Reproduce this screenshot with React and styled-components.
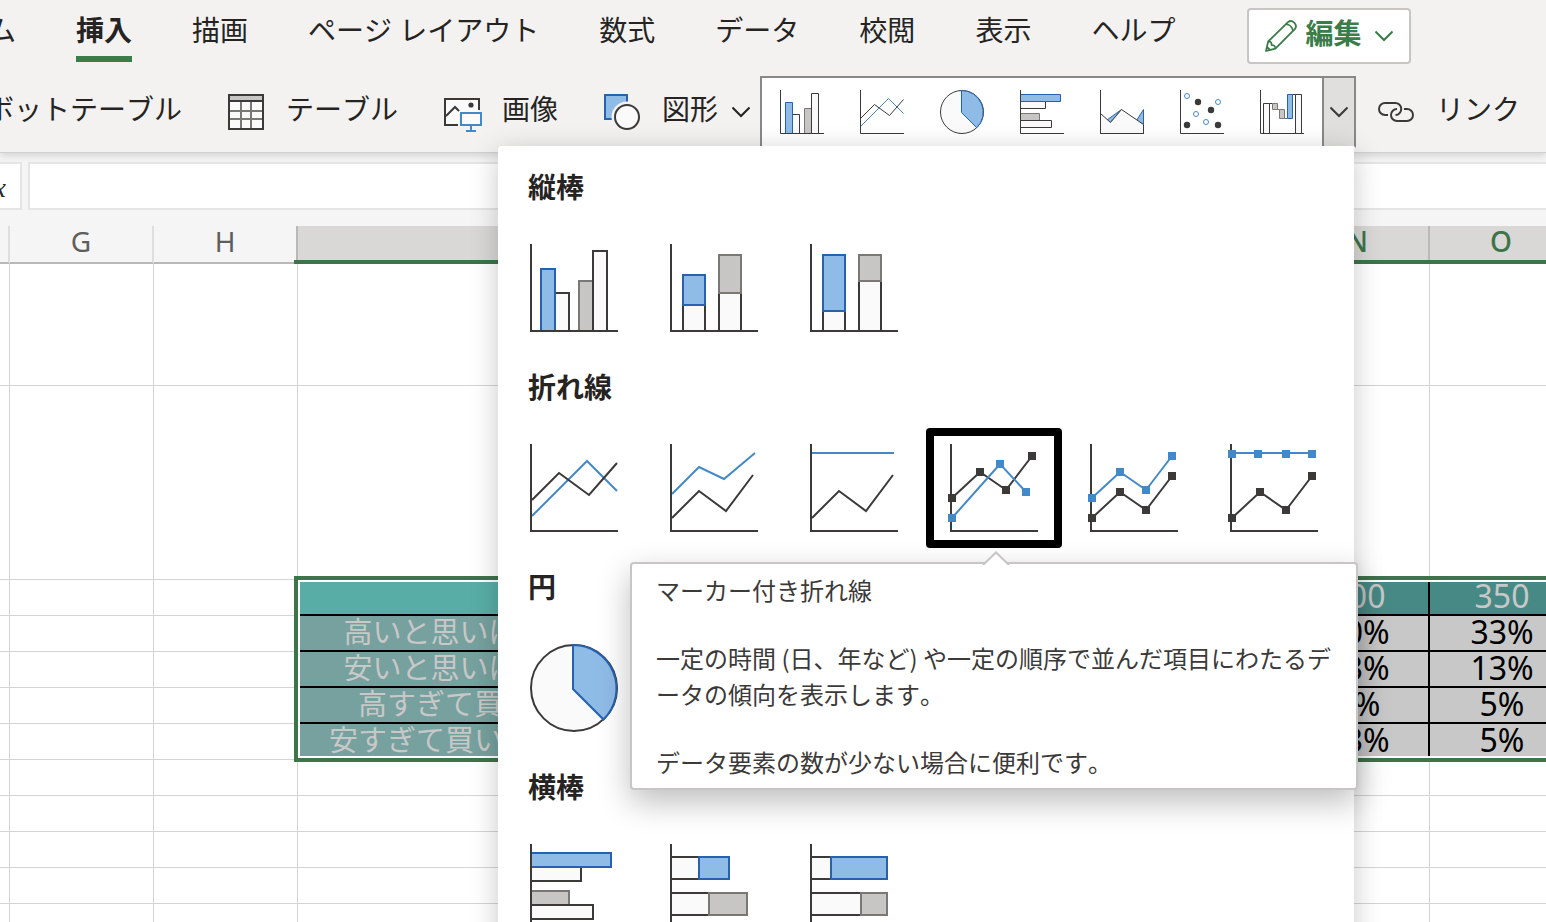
import React from "react";
import styled, { createGlobalStyle, css } from "styled-components";

const INK = "#3b3a39";
const BLUE_LINE = "#4389c9";
const BLUE_EDGE = "#2662ae";
const BLUE_FILL = "#8fbbe7";
const GREY_EDGE = "#7a7874";
const GREY_FILL = "#c8c6c4";
const PAPER = "#fafafa";
const GREEN = "#3d7449";

const GlobalStyle = createGlobalStyle`
  *, *::before, *::after { box-sizing: border-box; }
  body {
    margin: 0;
    background: #fff;
    color: #252423;
    font-family: "Noto Sans", "Noto Sans CJK JP", sans-serif;
    font-size: 28px;
    font-kerning: none;
  }
  button, input { font: inherit; font-kerning: none; color: inherit; }
`;

const Page = styled.div`
  display: flex;
  flex-direction: column;
  height: 100vh;
  overflow: hidden;
`;

const Ribbon = styled.header`
  position: relative;
  z-index: 2;
  flex: none;
  background: #f3f2f1;
  border-bottom: 1px solid #d2d0ce;
  box-shadow: 0 2px 8px rgba(0, 0, 0, 0.16);
`;

const TabRow = styled.nav`
  display: flex;
  align-items: flex-start;
  gap: 60px;
  height: 76px;
  margin-left: -68px;
`;

const Tab = styled.button`
  flex: none;
  height: 62px;
  padding: 4px 0 0;
  border: 0;
  border-bottom: 6px solid ${(p) => (p.$active ? "#3a7d48" : "transparent")};
  background: none;
  font-weight: ${(p) => (p.$active ? 700 : 400)};
  line-height: 50px;
  white-space: nowrap;
`;

const EditButton = styled.button`
  display: flex;
  flex: none;
  align-items: center;
  gap: 8px;
  height: 56px;
  margin: 8px 0 0 12px;
  padding: 0 16px;
  border: 2px solid #c8c6c4;
  border-radius: 4px;
  background: #fff;
  color: #3a7d48;
  font-weight: 700;
  line-height: 48px;
`;

const EditLabel = styled.span`
  padding: 0 6px 6px 0;
`;

const ToolRow = styled.div`
  display: flex;
  align-items: center;
  height: 76px;
  padding-bottom: 4px;
  margin-left: -42px;
`;

const Tool = styled.button`
  display: flex;
  flex: none;
  align-items: center;
  gap: 22px;
  margin-right: ${(p) => p.$after ?? 46}px;
  padding: 0;
  border: 0;
  background: none;
  line-height: 40px;
  white-space: nowrap;
`;

const ToolLabel = styled.span`
  padding-bottom: 6px;
`;

const WithArrow = styled.span`
  display: flex;
  align-items: center;
  gap: 14px;
`;

const Gallery = styled.div`
  position: relative;
  display: flex;
  flex: none;
  height: 72px;
  margin-right: 22px;
  border: 2px solid #8a8886;
  border-bottom-color: #fff;
  background: #fff;
`;

const GalleryButton = styled.button`
  display: grid;
  place-items: center;
  width: 80px;
  padding: 0;
  border: 0;
  background: none;
`;

const GalleryMore = styled.button`
  display: grid;
  place-items: center;
  width: 32px;
  padding: 0;
  border: 0;
  border-left: 2px solid #8a8886;
  background: #e1dfdd;
  color: ${INK};
`;

const Panel = styled.div`
  position: absolute;
  top: 68px;
  right: 0;
  z-index: 3;
  width: 856px;
  padding: 2px 8px 24px;
  border-radius: 4px;
  background: #fff;
  box-shadow: 0 6px 28px rgba(0, 0, 0, 0.22);
`;

const PanelHeading = styled.h2`
  margin: 0;
  padding: 0 0 2px 22px;
  font-size: 28px;
  font-weight: 700;
  line-height: 78px;
`;

const ChartRow = styled.div`
  display: flex;
  gap: 4px;
`;

const ChartSlot = styled.div`
  position: relative;
`;

const ChartButton = styled.button`
  display: grid;
  place-items: center;
  width: 136px;
  height: 120px;
  padding: 0;
  border: 8px solid ${(p) => (p.$selected ? "#000" : "transparent")};
  border-radius: 4px;
  background: none;
`;

const Tooltip = styled.div`
  position: absolute;
  top: 134px;
  left: -296px;
  z-index: 4;
  display: flex;
  flex-direction: column;
  gap: 32px;
  width: 728px;
  padding: 8px 8px 8px 24px;
  border: 2px solid #c8c6c4;
  border-radius: 4px;
  background: #fff;
  box-shadow: 0 12px 32px rgba(0, 0, 0, 0.26);
  color: ${INK};
  font-family: "Noto Sans CJK JP", sans-serif;
  font-size: 24px;
  line-height: 36px;

  p { margin: 0; white-space: nowrap; }
`;

const TooltipArrow = styled.svg`
  position: absolute;
  top: -13px;
  left: 350px;
`;

const FormulaBar = styled.div`
  display: flex;
  flex: none;
  gap: 6px;
  height: 73px;
  padding: 9px 0 16px;
  background: #f5f5f5;
`;

const FxBox = styled.button`
  flex: none;
  width: 22px;
  padding: 0 14px 4px 0;
  border: 2px solid #e5e5e5;
  border-left: 0;
  background: #fff;
  display: flex;
  align-items: flex-end;
  justify-content: flex-end;
  font-family: "Liberation Serif", serif;
  font-size: 28px;
  font-style: italic;
`;

const FormulaInput = styled.input`
  flex: 1;
  min-width: 0;
  padding: 0 12px;
  border: 2px solid #e5e5e5;
  border-right: 0;
  background: #fff;
  outline: 0;
`;

const SheetArea = styled.main`
  flex: 1;
  min-height: 0;
  overflow: hidden;
`;

const Sheet = styled.table`
  width: max(100%, 1574px);
  table-layout: fixed;
  border-collapse: separate;
  border-spacing: 0;
`;

const Column = styled.col`
  width: ${(p) => p.$width}px;
`;

const ColumnHead = styled.th`
  position: relative;
  height: 38px;
  padding: 0;
  border-right: 2px solid ${(p) => (p.$selected || p.$edge ? "#bab9b8" : "#dedede")};
  border-bottom: 2px solid #b8b8b8;
  background: ${(p) => (p.$selected ? "#d9d8d6" : "#f5f5f5")};
  color: ${(p) => (p.$selected ? GREEN : "#605e5c")};
  font-weight: ${(p) => (p.$selected ? 500 : 400)};
  line-height: 30px;
  vertical-align: top;

  ${(p) =>
    p.$selected &&
    css`
      &::after {
        content: "";
        position: absolute;
        right: -2px;
        bottom: -2px;
        left: -4px;
        height: 4px;
        background: ${GREEN};
      }
    `}
`;

const Row = styled.tr`
  height: ${(p) => p.$height ?? 36}px;
`;

const Cell = styled.td`
  padding: 0;
  border-right: 1px solid #d4d4d4;
  border-bottom: 1px solid #d4d4d4;
`;

const DataCell = styled.td`
  position: relative;
  height: 36px;
  padding: 0 0 2px 2px;
  border-right: 2px solid #000;
  border-bottom: 2px solid #000;
  background: ${(p) => (p.$head ? "#478a85" : "#c8c8c8")};
  color: ${(p) => (p.$head ? "#c8c8c8" : "#000")};
  font-size: 32px;
  line-height: 32px;
  text-align: center;
  white-space: nowrap;
`;

const LabelCell = styled(DataCell)`
  padding: 0 0 2px;
  background: ${(p) => (p.$active ? "#58aea6" : "#76a19e")};
  color: #c8c8c8;
  font-size: 29px;
`;

const SelectionFrame = styled.div`
  position: absolute;
  top: -4px;
  left: -4px;
  z-index: 1;
  width: 1400px;
  height: 186px;
  border: 4px solid ${GREEN};
  box-shadow: inset 0 0 0 2px #fff;
  pointer-events: none;
`;

/* Icons */

const Chevron = () => (
  <svg width="18" height="12" viewBox="0 0 18 12" fill="none" stroke="currentColor" strokeWidth="2">
    <path d="M0.5 1.5L9 10L17.5 1.5" />
  </svg>
);

const PencilIcon = () => (
  <svg width="32" height="32" viewBox="0 0 32 32" fill="none" stroke="currentColor" strokeWidth="1.8" strokeLinejoin="round">
    <path d="M1 31L3.2 21.4L23 2.2C26.8-1.2 33.4 4.4 29.8 9.2L10.4 28.6Z" />
    <path d="M20.8 4.2C24.6 4.6 27.6 7.6 28 11.2M3.2 21.4C6 21.4 6.8 23 6.6 25.2C8.8 25 10.4 26 10.4 28.6M2 27L5 30" />
  </svg>
);

const ToolIcon = ({ children }) => (
  <svg width="36" height="36" viewBox="0 0 36 36" fill="none" overflow="visible" strokeWidth="2">
    {children}
  </svg>
);

const TableIcon = () => (
  <ToolIcon>
    <path d="M1 1H35V35H1Z" fill={PAPER} />
    <path d="M1 1H35V7H1Z" fill={GREY_FILL} />
    <path d="M13 8V34M23 8V34M2 17H34M2 25H34" stroke={GREY_EDGE} />
    <path d="M1 1H35V35H1ZM1 7H35" stroke={INK} />
  </ToolIcon>
);

const PictureIcon = () => (
  <ToolIcon>
    <path d="M1 5H35V19H15V31H1Z" fill={PAPER} />
    <path d="M35 16V5H1V31H14M2 22L11 13L15 17" stroke={INK} />
    <circle cx="27" cy="11" r="2.6" fill={INK} />
    <path d="M17 19H37V31H17ZM27 32V36M22 37H32" fill={PAPER} stroke={BLUE_LINE} />
  </ToolIcon>
);

const ShapesIcon = () => (
  <ToolIcon>
    <path d="M1 1H23V25H1Z" fill={BLUE_FILL} stroke={BLUE_EDGE} />
    <circle cx="23" cy="23" r="15.5" fill="#f3f2f1" />
    <circle cx="23" cy="23" r="12" fill={PAPER} stroke={INK} />
  </ToolIcon>
);

const LinkIcon = () => (
  <ToolIcon>
    <path
      d="M10 21H7A6 6 0 0 1 7 9H17A6 6 0 0 1 17.5 21M26 15H29A6 6 0 0 1 29 27H19A6 6 0 0 1 19 15"
      stroke={INK}
    />
  </ToolIcon>
);

const dark = { fill: PAPER, stroke: INK };
const blue = { fill: BLUE_FILL, stroke: BLUE_EDGE };
const grey = { fill: GREY_FILL, stroke: GREY_EDGE };

const Markers = ({ points, color }) =>
  points.map(([x, y]) => <rect key={`${x}-${y}`} x={x - 4} y={y - 4} width="8" height="8" fill={color} stroke="none" />);

const LowMarkers = [[2, 74], [30, 48], [56, 66], [82, 32]];
const HighMarkers = [[2, 54], [30, 28], [56, 46], [82, 12]];
const lineOf = (points) => "M" + points.map((p) => p.join(" ")).join("L");

const SHAPES = {
  column: (
    <>
      <path d="M25 87V49H39V87" {...dark} />
      <path d="M11 87V25H25V87" {...blue} />
      <path d="M49 87V37H63V87" {...grey} />
      <path d="M63 87V7H77V87" {...dark} />
    </>
  ),
  columnStacked: (
    <>
      <path d="M13 87V61H35V87M49 87V49H71V87" {...dark} />
      <path d="M13 31H35V61H13Z" {...blue} />
      <path d="M49 11H71V49H49Z" {...grey} />
    </>
  ),
  columnFull: (
    <>
      <path d="M13 87V67H35V87M49 87V37H71V87" {...dark} />
      <path d="M13 11H35V67H13Z" {...blue} />
      <path d="M49 11H71V37H49Z" {...grey} />
    </>
  ),
  line: (
    <>
      <path d="M2 72L57 17L87 47" stroke={BLUE_LINE} />
      <path d="M2 56L29 29L59 51L87 19" stroke={INK} />
    </>
  ),
  lineStacked: (
    <>
      <path d="M2 50L29 23L54 35L85 9" stroke={BLUE_LINE} />
      <path d="M2 74L29 47L56 67L83 31" stroke={INK} />
    </>
  ),
  lineFull: (
    <>
      <path d="M2 9H84" stroke={BLUE_LINE} />
      <path d="M2 74L29 47L56 67L83 31" stroke={INK} />
    </>
  ),
  lineMarked: (
    <>
      <path d={lineOf(HighMarkers)} stroke={INK} />
      <Markers points={HighMarkers} color={INK} />
      <path d="M2 74L50 20L76 48" stroke={BLUE_LINE} />
      <Markers points={[[2, 74], [50, 20], [76, 48]]} color={BLUE_LINE} />
    </>
  ),
  lineMarkedStacked: (
    <>
      <path d={lineOf(HighMarkers)} stroke={BLUE_LINE} />
      <Markers points={HighMarkers} color={BLUE_LINE} />
      <path d={lineOf(LowMarkers)} stroke={INK} />
      <Markers points={LowMarkers} color={INK} />
    </>
  ),
  lineMarkedFull: (
    <>
      <path d="M2 9H82" stroke={BLUE_LINE} />
      <Markers points={[[2, 10], [28, 10], [56, 10], [82, 10]]} color={BLUE_LINE} />
      <path d={lineOf(LowMarkers)} stroke={INK} />
      <Markers points={LowMarkers} color={INK} />
    </>
  ),
  pie: (
    <>
      <circle cx="44" cy="44" r="43" {...dark} />
      <path d="M43 45V1A43.5 43.5 0 0 1 73.5 75.5Z" {...blue} />
    </>
  ),
  bar: (
    <>
      <path d="M1 23H51V37H1" {...dark} />
      <path d="M1 9H81V23H1" {...blue} />
      <path d="M1 47H39V61H1" {...grey} />
      <path d="M1 61H63V75H1" {...dark} />
    </>
  ),
  barStacked: (
    <>
      <path d="M1 13H29V35H1M1 49H39V71H1" {...dark} />
      <path d="M29 13H59V35H29Z" {...blue} />
      <path d="M39 49H77V71H39Z" {...grey} />
    </>
  ),
  barFull: (
    <>
      <path d="M1 13H21V35H1M1 49H51V71H1" {...dark} />
      <path d="M21 13H77V35H21Z" {...blue} />
      <path d="M51 49H77V71H51Z" {...grey} />
    </>
  ),
  area: (
    <>
      <path d="M14 60L43 39L21 65ZM73 61L87 39V69Z" {...blue} />
      <path d="M1 47L21 65L43 39L87 69V87H1Z" {...dark} />
    </>
  ),
  scatter: (
    <>
      {[[14, 12], [76, 24], [32, 48], [52, 64]].map(([x, y]) => (
        <circle key={x} cx={x} cy={y} r="5" fill="#fff" stroke={BLUE_LINE} />
      ))}
      {[[36, 24], [62, 40], [14, 70], [76, 70]].map(([x, y]) => (
        <circle key={x} cx={x} cy={y} r="6.4" fill={INK} stroke="none" />
      ))}
    </>
  ),
  waterfall: (
    <>
      <path d="M7 87V27H19V87M71 87V9H83V87" {...dark} />
      <path d="M19 27H25M65 9H71" stroke={INK} />
      <path d="M25 27H35V39H25ZM39 39H49V57H39ZM35 39H39M49 57H55" {...grey} />
      <path d="M55 9H65V57H55Z" {...blue} />
    </>
  ),
};

const ChartIcon = ({ kind, size = 88 }) => (
  <svg width={size} height={size} viewBox="0 0 88 88" fill="none" strokeWidth="2" overflow="visible">
    {kind.startsWith("lineMarked") && <path d="M1 0V87H88" stroke={INK} />}
    {SHAPES[kind]}
    {kind !== "pie" && !kind.startsWith("lineMarked") && <path d="M1 0V87H88" stroke={INK} />}
  </svg>
);

/* Content */

const TABS = ["ホーム", "挿入", "描画", "ページ レイアウト", "数式", "データ", "校閲", "表示", "ヘルプ"];

const QUICK_CHARTS = [
  ["column", "縦棒"],
  ["line", "折れ線"],
  ["pie", "円"],
  ["bar", "横棒"],
  ["area", "面"],
  ["scatter", "散布図"],
  ["waterfall", "ウォーターフォール"],
];

const SECTIONS = [
  { title: "縦棒", charts: ["column", "columnStacked", "columnFull"] },
  {
    title: "折れ線",
    charts: ["line", "lineStacked", "lineFull", "lineMarked", "lineMarkedStacked", "lineMarkedFull"],
  },
  { title: "円", charts: ["pie"] },
  { title: "横棒", charts: ["bar", "barStacked", "barFull"] },
];

const COLUMNS = [
  { name: "", width: 10 },
  { name: "G", width: 144 },
  { name: "H", width: 144, edge: true },
  { name: "I", width: 412, selected: true },
  { name: "J", width: 144, selected: true },
  { name: "K", width: 144, selected: true },
  { name: "L", width: 144, selected: true },
  { name: "M", width: 144, selected: true },
  { name: "N", width: 144, selected: true },
  { name: "O", width: 144, selected: true },
];

const DATA = [
  { label: "", values: ["", "", "", "", "300", "350"] },
  { label: "高いと思いはじめる価格", values: ["", "", "", "", "20%", "33%"] },
  { label: "安いと思いはじめる価格", values: ["", "", "", "", "23%", "13%"] },
  { label: "高すぎて買わない価格", values: ["", "", "", "", "3%", "5%"] },
  { label: "安すぎて買いたくない価格", values: ["", "", "", "", "13%", "5%"] },
];

const EmptyRow = ({ height }) => (
  <Row $height={height}>
    {COLUMNS.map((c, i) => (
      <Cell key={i} />
    ))}
  </Row>
);

const ChartTooltip = () => (
  <Tooltip role="tooltip" id="chart-tip">
    <TooltipArrow width="28" height="14" viewBox="0 0 28 14">
      <path d="M1 14L14 1.5L27 14" fill="#fff" stroke="#c8c6c4" strokeWidth="2" />
    </TooltipArrow>
    <p>マーカー付き折れ線</p>
    <p>
      一定の時間 (日、年など) や一定の順序で並んだ項目にわたるデ
      <br />
      ータの傾向を表示します。
    </p>
    <p>データ要素の数が少ない場合に便利です。</p>
  </Tooltip>
);

const ChartPanel = () => (
  <Panel>
    {SECTIONS.map((section) => (
      <section key={section.title}>
        <PanelHeading>{section.title}</PanelHeading>
        <ChartRow>
          {section.charts.map((kind) => {
            const selected = kind === "lineMarked";
            return (
              <ChartSlot key={kind}>
                <ChartButton
                  $selected={selected}
                  aria-label={section.title}
                  aria-describedby={selected ? "chart-tip" : undefined}
                >
                  <ChartIcon kind={kind} />
                </ChartButton>
                {selected && <ChartTooltip />}
              </ChartSlot>
            );
          })}
        </ChartRow>
      </section>
    ))}
  </Panel>
);

export default function App() {
  return (
    <Page>
      <GlobalStyle />
      <Ribbon>
        <TabRow>
          {TABS.map((name) => (
            <Tab key={name} $active={name === "挿入"}>
              {name}
            </Tab>
          ))}
          <EditButton>
            <PencilIcon />
            <EditLabel>編集</EditLabel>
            <Chevron />
          </EditButton>
        </TabRow>
        <ToolRow>
          <Tool>
            <ToolLabel>ピボットテーブル</ToolLabel>
          </Tool>
          <Tool>
            <TableIcon />
            <ToolLabel>テーブル</ToolLabel>
          </Tool>
          <Tool>
            <PictureIcon />
            <ToolLabel>画像</ToolLabel>
          </Tool>
          <Tool $after={10}>
            <ShapesIcon />
            <WithArrow>
              <ToolLabel>図形</ToolLabel>
              <Chevron />
            </WithArrow>
          </Tool>
          <Gallery>
            {QUICK_CHARTS.map(([kind, label]) => (
              <GalleryButton key={kind} aria-label={label}>
                <ChartIcon kind={kind} size={44} />
              </GalleryButton>
            ))}
            <GalleryMore aria-label="その他" aria-expanded="true">
              <Chevron />
            </GalleryMore>
            <ChartPanel />
          </Gallery>
          <Tool>
            <LinkIcon />
            <ToolLabel>リンク</ToolLabel>
          </Tool>
        </ToolRow>
      </Ribbon>
      <FormulaBar>
        <FxBox>fx</FxBox>
        <FormulaInput aria-label="数式バー" />
      </FormulaBar>
      <SheetArea>
        <Sheet>
          <colgroup>
            {COLUMNS.map((c, i) => (
              <Column key={i} $width={c.width} />
            ))}
          </colgroup>
          <thead>
            <tr>
              {COLUMNS.map((c, i) => (
                <ColumnHead key={i} $selected={c.selected} $edge={c.edge}>
                  {c.name}
                </ColumnHead>
              ))}
            </tr>
          </thead>
          <tbody>
            <EmptyRow height={122} />
            <EmptyRow height={194} />
            {DATA.map((row, r) => (
              <Row key={r}>
                <Cell />
                <Cell />
                <Cell />
                <LabelCell $active={r === 0}>
                  {row.label}
                  {r === 0 && <SelectionFrame />}
                </LabelCell>
                {row.values.map((value, i) => (
                  <DataCell key={i} $head={r === 0}>
                    {value}
                  </DataCell>
                ))}
              </Row>
            ))}
            {[0, 1, 2, 3, 4].map((n) => (
              <EmptyRow key={n} />
            ))}
          </tbody>
        </Sheet>
      </SheetArea>
    </Page>
  );
}
